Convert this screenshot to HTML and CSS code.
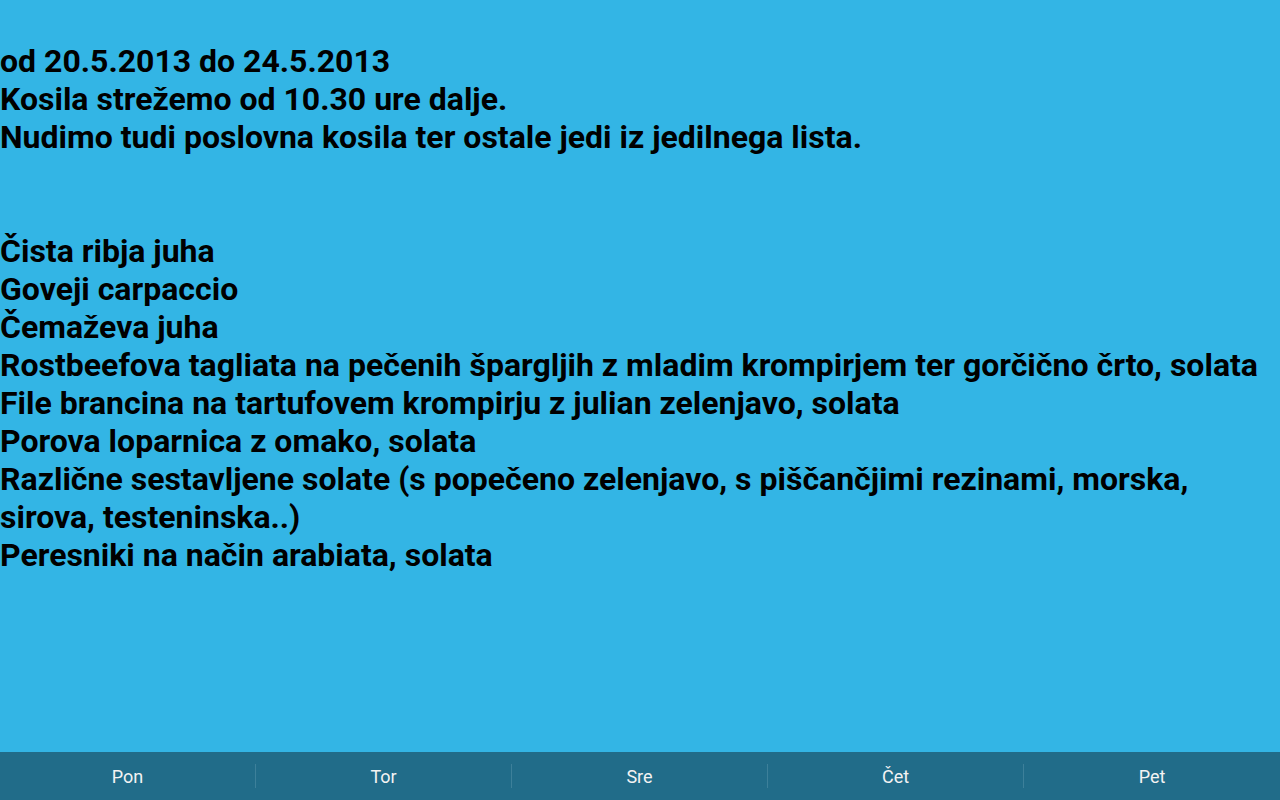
FILE: index.html
```html
<!DOCTYPE html>
<html lang="sl">
<head>
<meta charset="utf-8">
<title>Kosila</title>
<link rel="stylesheet" href="styles.css">
</head>
<body>
<main class="menu">
<p class="intro">od 20.5.2013 do 24.5.2013<br>Kosila strežemo od 10.30 ure dalje.<br>Nudimo tudi poslovna kosila ter ostale jedi iz jedilnega lista.</p>
<ul class="dishes">
<li>Čista ribja juha</li>
<li>Goveji carpaccio</li>
<li>Čemaževa juha</li>
<li>Rostbeefova tagliata na pečenih špargljih z mladim krompirjem ter gorčično črto, solata</li>
<li>File brancina na tartufovem krompirju z julian zelenjavo, solata</li>
<li>Porova loparnica z omako, solata</li>
<li>Različne sestavljene solate (s popečeno zelenjavo, s piščančjimi rezinami, morska, sirova, testeninska..)</li>
<li>Peresniki na način arabiata, solata</li>
</ul>
</main>
<nav class="days">
<button class="day" type="button">Pon</button>
<button class="day" type="button">Tor</button>
<button class="day" type="button">Sre</button>
<button class="day" type="button">Čet</button>
<button class="day" type="button">Pet</button>
</nav>
</body>
</html>
```
FILE: styles.css
```css
* {
  box-sizing: border-box;
}

body {
  display: flex;
  flex-direction: column;
  min-height: 100vh;
  margin: 0;
  background: #33b5e5;
  color: #000;
  font-family: Roboto, sans-serif;
}

.menu {
  flex: 1;
  padding-top: 42px;
  font-size: 32px;
  font-weight: 700;
  line-height: 38px;
}

.intro {
  margin: 0 0 76px;
}

.dishes {
  margin: 0;
  padding: 0;
  list-style: none;
}

.days {
  display: grid;
  grid-template-columns: repeat(5, 1fr);
  padding: 12px 0;
  background: #216c89;
}

.day {
  height: 24px;
  padding: 2px 0 0;
  border: 0;
  border-right: 1px solid #3d809a;
  background: none;
  color: #f3f3f3;
  font: 400 18px/22px Roboto, sans-serif;
}

.day:last-child {
  border-right: 0;
}
```
